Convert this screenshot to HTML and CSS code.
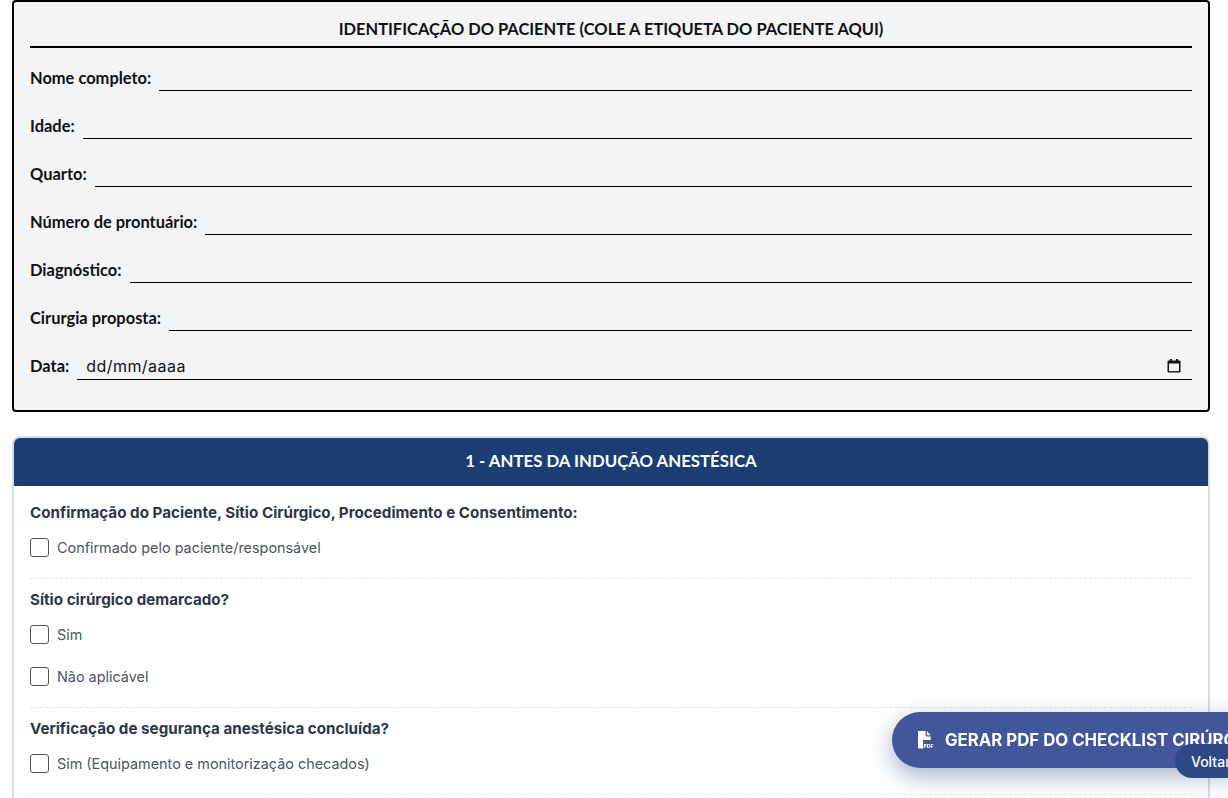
FILE: index.html
```html
<!DOCTYPE html>
<html lang="pt-BR">
<head>
<meta charset="utf-8">
<title>Checklist Cirúrgico</title>
<link rel="stylesheet" href="styles.css">
</head>
<body>
<main class="page">
  <section class="patient">
    <h2 class="patient-title">IDENTIFICAÇÃO DO PACIENTE (COLE A ETIQUETA DO PACIENTE AQUI)</h2>
    <div class="field"><label>Nome completo:</label><span class="line"></span></div>
    <div class="field"><label>Idade:</label><span class="line"></span></div>
    <div class="field"><label>Quarto:</label><span class="line"></span></div>
    <div class="field"><label>Número de prontuário:</label><span class="line"></span></div>
    <div class="field"><label>Diagnóstico:</label><span class="line"></span></div>
    <div class="field"><label>Cirurgia proposta:</label><span class="line"></span></div>
    <div class="field field-date"><label>Data:</label>
      <span class="line line-date"><span class="date-text">dd/mm/aaaa</span>
        <svg class="cal" viewBox="0 0 14 14" width="14" height="14"><path d="M3 0h2v1.5h4V0h2v1.5h1.5A1 1 0 0 1 13.5 2.5v10a1 1 0 0 1-1 1h-11a1 1 0 0 1-1-1v-10a1 1 0 0 1 1-1H3z" fill="#111"/><rect x="2" y="4.5" width="10" height="7.6" fill="#f3f4f6"/></svg>
      </span>
    </div>
  </section>

  <section class="card">
    <header class="card-head">1 - ANTES DA INDUÇÃO ANESTÉSICA</header>
    <div class="card-body">
      <div class="group">
        <h3>Confirmação do Paciente, Sítio Cirúrgico, Procedimento e Consentimento:</h3>
        <div class="check"><span class="box"></span>Confirmado pelo paciente/responsável</div>
      </div>
      <div class="group">
        <h3>Sítio cirúrgico demarcado?</h3>
        <div class="check"><span class="box"></span>Sim</div>
        <div class="check"><span class="box"></span>Não aplicável</div>
      </div>
      <div class="group">
        <h3>Verificação de segurança anestésica concluída?</h3>
        <div class="check"><span class="box"></span>Sim (Equipamento e monitorização checados)</div>
      </div>
    </div>
  </section>
</main>

<button class="fab">
  <svg class="fab-icon" viewBox="0 0 17 18" width="17" height="18"><path d="M1 0h6.6v4.6a.8.8 0 0 0 .8.8h4.2V9H5v8.6H1a1 1 0 0 1-1-1V1a1 1 0 0 1 1-1z" fill="#fff"/><path d="M8.8 0 12.6 4.2H8.8z" fill="#fff"/><text x="5.6" y="16.6" class="fab-pdf">PDF</text></svg>
  <span>GERAR PDF DO CHECKLIST CIRÚRGICO</span>
</button>
<button class="back">Voltar ao início</button>
</body>
</html>
```
FILE: styles.css
```css
* { box-sizing: border-box; }
html, body { margin: 0; height: 798px; overflow: hidden; background: #fff; }
body { font-family: "Inter", "Liberation Sans", sans-serif; color: #1f2937; }
.page { padding: 0 18px 0 12px; }

.patient {
  height: 412px;
  background: #f3f4f6;
  border: 2px solid #000;
  border-radius: 4px;
  padding: 16px 16px 0;
  font-family: "Lato", "Noto Sans", sans-serif;
  color: #111;
}
.patient-title {
  margin: 0 0 -5px;
  height: 30px;
  border-bottom: 2px solid #000;
  text-align: center;
  font-size: 16.45px;
  line-height: 22px;
  font-weight: 700;
}
.field { display: flex; align-items: flex-end; height: 42px; gap: 8px; margin-top: 6px; }
.field label { font-size: 16.45px; font-weight: 700; line-height: 22px; padding-bottom: 2px; white-space: nowrap; }
.field-date { height: 43px; }
.field-date label { padding-bottom: 3px; }
.line { flex: 1; height: 1px; background: #000; display: block; }
.line-date {
  height: 26px; background: none; border-bottom: 1px solid #000;
  display: flex; justify-content: space-between; align-items: center;
  padding: 0 11px 2px 9px;
  font-family: "Inter", sans-serif; font-size: 16px;
}
.date-text { font-size: 16px; letter-spacing: .45px; }
.cal { display: block; }

.card {
  margin-top: 24px;
  border: 2px solid #d5dcea;
  border-radius: 8px;
  background: #fff;
  height: 600px;
  overflow: hidden;
}
.card-head {
  height: 48px;
  margin: 0;
  background: #1a3e72;
  color: #fff;
  text-align: center;
  font-family: "Lato", "Noto Sans", sans-serif;
  font-size: 16.8px;
  font-weight: 700;
  line-height: 46px;
}
.card-body { padding: 7px 16px 0; }
.group { border-bottom: 1px dashed #e5e7eb; padding: 11px 0 10px; }
.group:first-child { padding-top: 10px; }
.group h3 { margin: 0; font-size: 15.2px; font-weight: 700; line-height: 20px; color: #2d3748; }
.check { display: flex; align-items: center; height: 42px; font-size: 14.4px; color: #4b5563; }
.group h3 + .check { margin-top: 3px; }
.box {
  width: 19px; height: 19px; margin-right: 8px;
  border: 1px solid #555; border-radius: 3px; background: #fff;
}

.fab {
  position: fixed; left: 892px; top: 712px; width: 420px; height: 56px;
  display: flex; align-items: center; gap: 10px;
  padding: 0 0 0 26px;
  border: 0; border-radius: 28px;
  background: #43559b; color: #fff;
  font-family: "Inter", sans-serif; font-size: 16.8px; font-weight: 700; white-space: nowrap;
  box-shadow: 0 8px 24px rgba(26, 62, 114, .4);
}
.fab-icon { flex: none; overflow: visible; }
.fab-pdf { font-family: "Inter", sans-serif; font-size: 5px; font-weight: 800; fill: #fff; }
.back {
  position: fixed; left: 1175px; top: 744px; width: 140px; height: 34px;
  border: 0; border-radius: 17px;
  background: #2d4a86; color: #fff;
  text-align: left; padding: 0 0 0 16px;
  font-family: "Inter", sans-serif; font-size: 14px; font-weight: 500; white-space: nowrap;
}
```
